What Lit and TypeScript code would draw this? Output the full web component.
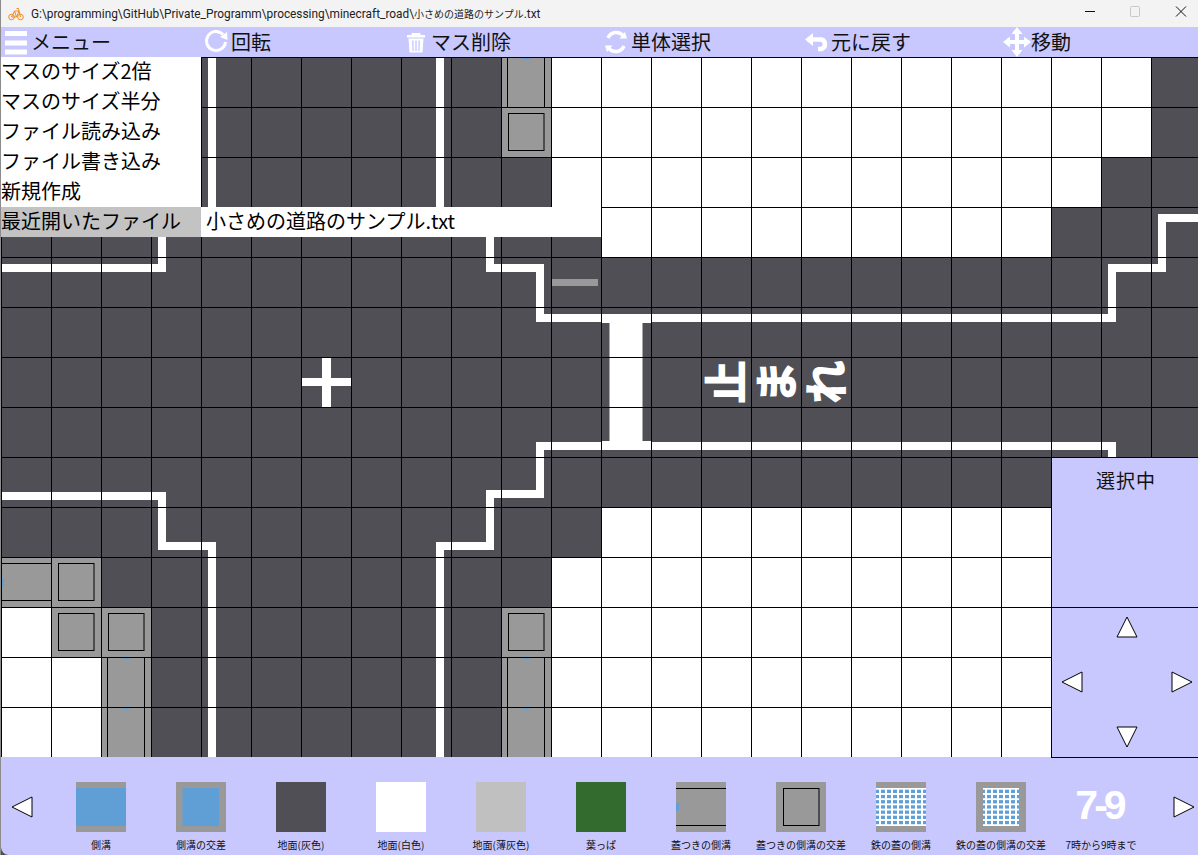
import { LitElement, css, html, svg } from "lit";
import { customElement, property } from "lit/decorators.js";

const FONT = `"Noto Sans CJK JP", "Liberation Sans", sans-serif`;

const ROWS = [
  "ddddddddddvwwwwwwwwwwwwd",
  "ddddddddddxwwwwwwwwwwwwd",
  "dddddddddddwwwwwwwwwwwdd",
  "ddddddddddddwwwwwwwwwddd",
  "dddddddddddddddddddddddd",
  "dddddddddddddddddddddddd",
  "dddddddddddddd止まれddddddd",
  "dddddddddddddddddddddddd",
  "dddddddddddddddddddddddd",
  "ddddddddddddwwwwwwwwwwww",
  "hxdddddddddwwwwwwwwwwwww",
  "wxxdddddddxwwwwwwwwwwwww",
  "wwvdddddddvwwwwwwwwwwwww",
  "wwvdddddddvwwwwwwwwwwwww",
];

const PALETTE = [
  ["g", "側溝"],
  ["c", "側溝の交差"],
  ["d", "地面(灰色)"],
  ["w", "地面(白色)"],
  ["l", "地面(薄灰色)"],
  ["f", "葉っぱ"],
  ["h", "蓋つきの側溝"],
  ["x", "蓋つきの側溝の交差"],
  ["m", "鉄の蓋の側溝"],
  ["n", "鉄の蓋の側溝の交差"],
];

const GRAY = "#999999";
const BLUE = "#609fd6";

function metal(x0: number, x1: number) {
  const cells = [];
  for (let r = 0; r < 7; r++) {
    for (let c = 0; c < 9; c++) {
      const x = -1 + c * 6;
      const l = Math.max(x, x0);
      const rr = Math.min(x + 4, x1);
      if (rr > l) cells.push(svg`<rect x=${l} y=${7.7 + r * 5.2} width=${rr - l} height="3.3" fill=${BLUE} />`);
    }
  }
  return cells;
}

function tileArt(kind: string) {
  switch (kind) {
    case "g":
      return svg`<rect width="50" height="50" fill=${GRAY} /><rect y="6" width="50" height="38" fill=${BLUE} />`;
    case "c":
      return svg`<rect width="50" height="50" fill=${GRAY} /><rect x="6.5" y="6" width="36.5" height="38" fill=${BLUE} />`;
    case "h":
      return svg`<rect width="50" height="50" fill=${GRAY} />
        <path d="M0 6.5H50M0 43.5H50" stroke="#000" fill="none" />
        <rect y="21" width="3" height="7.5" fill=${BLUE} />`;
    case "v":
      return svg`<rect width="50" height="50" fill=${GRAY} />
        <path d="M6.5 0V50M43.5 0V50" stroke="#000" fill="none" />
        <rect x="22" width="7" height="2" fill=${BLUE} />`;
    case "x":
      return svg`<rect width="50" height="50" fill=${GRAY} />
        <rect x="7.5" y="6.5" width="35.5" height="37" fill="none" stroke="#000" />`;
    case "m":
      return svg`<rect width="50" height="50" fill=${GRAY} /><rect y="6" width="50" height="38" fill="#fff" />${metal(0, 50)}`;
    case "n":
      return svg`<rect width="50" height="50" fill=${GRAY} /><rect x="7" y="6" width="36" height="38" fill="#fff" />${metal(7, 43)}`;
    default:
      return null;
  }
}

@customElement("road-tile")
export class RoadTile extends LitElement {
  @property() kind = "d";

  render() {
    const art = tileArt(this.kind);
    if (art) return html`<svg viewBox="0 0 50 50" width="50" height="50">${art}</svg>`;
    if ("dwlf".includes(this.kind)) return html`<div class="fill ${this.kind}"></div>`;
    return html`<div class="fill d"><span>${this.kind}</span></div>`;
  }

  static styles = css`
    :host {
      display: block;
      width: 50px;
      height: 50px;
    }
    svg {
      display: block;
    }
    .fill {
      display: flex;
      width: 100%;
      height: 100%;
      align-items: center;
      justify-content: center;
    }
    .d {
      background: #504f55;
    }
    .w {
      background: #ffffff;
    }
    .l {
      background: #c0c0c0;
    }
    .f {
      background: #336b2e;
    }
    span {
      display: block;
      transform: translateX(-2px) rotate(-90deg);
      color: #fff;
      font-family: ${css([FONT] as any)};
      font-size: 44px;
      font-weight: 900;
      line-height: 1;
    }
  `;
}

function arrow(dir: string) {
  const points: Record<string, string> = {
    left: "21,1 21,21 1,11",
    right: "1,1 1,21 21,11",
    up: "1,21 21,21 11,1",
    down: "1,1 21,1 11,21",
  };
  return html`<svg class="arrow" viewBox="0 0 22 22" width="22" height="22">
    <polygon points=${points[dir]} fill="#fff" stroke="#000" />
  </svg>`;
}

@customElement("road-map")
export class RoadMap extends LitElement {
  render() {
    return html`
      <div class="cells">
        ${ROWS.map((row) => [...row].map((k) => html`<road-tile kind=${k}></road-tile>`))}
      </div>
      <svg class="marks" viewBox="1 57 1197 700" width="1197" height="700">
        <g fill="none" stroke="#fff" stroke-width="8">
          <path d="M1 268H162V218H212V57" />
          <path d="M440 57V218H490V268H540V318H1112V268H1162V218H1200" />
          <path d="M1 496H162V546H212V757" />
          <path d="M1112 457V446H540V494H490V546H440V757" />
        </g>
        <g fill="#fff">
          <rect x="601.5" y="315" width="50" height="8" />
          <rect x="601.5" y="441" width="50" height="8" />
          <rect x="609.5" y="315" width="33" height="134" />
          <rect x="322" y="358" width="9" height="49" />
          <rect x="302" y="378" width="49" height="8" />
        </g>
        <rect x="552" y="279" width="46" height="7" fill="#999999" />
      </svg>
      <div class="lines"></div>

      <div class="menu">
        <div class="item">マスのサイズ2倍</div>
        <div class="item">マスのサイズ半分</div>
        <div class="item">ファイル読み込み</div>
        <div class="item">ファイル書き込み</div>
        <div class="item">新規作成</div>
        <div class="item active">最近開いたファイル</div>
      </div>
      <div class="submenu">小さめの道路のサンプル.txt</div>

      <div class="panel">
        <div class="selected">選択中</div>
        <div class="pad">
          <span></span>${arrow("up")}<span></span>
          ${arrow("left")}<span></span>${arrow("right")}
          <span></span>${arrow("down")}<span></span>
        </div>
      </div>
    `;
  }

  static styles = css`
    :host {
      display: block;
      position: relative;
      height: 700px;
      font-family: ${css([FONT] as any)};
    }
    .cells {
      display: grid;
      grid-template-columns: repeat(24, 50px);
      grid-auto-rows: 50px;
    }
    .marks {
      position: absolute;
      left: 0;
      top: 0;
    }
    .lines {
      position: absolute;
      inset: 0;
      background-image: linear-gradient(#000 1px, transparent 1px),
        linear-gradient(90deg, #000 1px, transparent 1px);
      background-size: 50px 50px;
    }
    .menu {
      position: absolute;
      left: 0;
      top: 0;
      width: 200px;
      background: #fff;
    }
    .item {
      height: 30px;
      color: #000;
      font-size: 20px;
      line-height: 28px;
      white-space: nowrap;
    }
    .item.active {
      background: #c3c3c3;
    }
    .submenu {
      position: absolute;
      left: 200px;
      top: 150px;
      width: 395px;
      height: 30px;
      padding-left: 5px;
      background: #fff;
      font-size: 20px;
      line-height: 28px;
      white-space: nowrap;
    }
    .panel {
      position: absolute;
      left: 1050px;
      top: 400px;
      width: 147px;
      height: 301px;
      box-sizing: border-box;
      border: 1px solid #000;
      border-right: none;
      background: #c8c8ff;
    }
    .selected {
      height: 150px;
      box-sizing: border-box;
      border-bottom: 1px solid #000;
      padding: 8px 0 0 2px;
      font-size: 19px;
      line-height: 28px;
      letter-spacing: 1px;
      text-align: center;
      color: #111;
    }
    .pad {
      display: grid;
      grid-template-columns: repeat(3, 22px);
      grid-template-rows: repeat(3, 22px);
      gap: 33px;
      justify-content: center;
      padding: 8px 0 0 3px;
    }
    .arrow {
      display: block;
    }
  `;
}

@customElement("tile-palette")
export class TilePalette extends LitElement {
  render() {
    return html`
      <div class="side">${arrow("left")}</div>
      ${PALETTE.map(
        ([kind, label]) => html`
          <div class="entry">
            <road-tile kind=${kind}></road-tile>
            <div class="label">${label}</div>
          </div>
        `
      )}
      <div class="entry">
        <div class="time">7-9</div>
        <div class="label">7時から9時まで</div>
      </div>
      <div class="side end">${arrow("right")}</div>
    `;
  }

  static styles = css`
    :host {
      display: flex;
      height: 98px;
      background: #c8c8ff;
      border-bottom-left-radius: 8px;
      font-family: ${css([FONT] as any)};
    }
    .side {
      width: 50px;
      flex: none;
      padding: 39px 0 0 10px;
      box-sizing: border-box;
    }
    .side.end {
      padding-left: 22px;
    }
    .arrow {
      display: block;
    }
    .entry {
      display: flex;
      flex-direction: column;
      align-items: center;
      width: 100px;
      flex: none;
      padding-top: 25px;
      box-sizing: border-box;
    }
    .label {
      margin-top: 6px;
      color: #111;
      font-size: 10px;
      line-height: 14px;
      white-space: nowrap;
    }
    .time {
      height: 50px;
      margin-right: 4px;
      color: #fff;
      font-family: "Liberation Sans", sans-serif;
      font-size: 41px;
      font-weight: 700;
      letter-spacing: -4px;
      line-height: 46px;
    }
  `;
}

const ICONS = {
  menu: svg`<rect x="1" y="4" width="22" height="5" /><rect x="1" y="13.5" width="22" height="5" /><rect x="1" y="22.5" width="22" height="5" />`,
  rotate: svg`<path d="M19 7.5A9.5 9.5 0 1 0 21.5 15" fill="none" stroke="#fff" stroke-width="3" />
    <polygon points="23,5 23.5,13 16,10" />`,
  trash: svg`<rect x="7.5" y="6" width="9" height="2" /><rect x="3" y="8" width="18" height="2.5" />
    <path fill-rule="evenodd" d="M4.5 11.5H19.5L18.5 25.5H5.5ZM8 13.5L8.5 24H9.8L9.5 13.5ZM11.3 13.5V24H12.7V13.5ZM14.5 13.5L14.2 24H15.5L16 13.5Z" />`,
  single: svg`<path d="M4 11A9 9 0 0 1 19.5 9M20 19A9 9 0 0 1 4.5 21" fill="none" stroke="#fff" stroke-width="3.5" />
    <polygon points="23,11.5 15.5,11.5 21,5" /><polygon points="1,18.5 8.5,18.5 3,25" />`,
  undo: svg`<polygon points="1,12.5 9,6 9,19" />
    <path d="M8 12.5H17.5A5 5 0 0 1 17.5 22H14" fill="none" stroke="#fff" stroke-width="4.5" />`,
  move: svg`<polygon points="13,0 18.5,7 7.5,7" /><polygon points="13,30 18.5,23 7.5,23" />
    <polygon points="-1,15 6,9.5 6,20.5" /><polygon points="27,15 20,9.5 20,20.5" />
    <rect x="11" y="6" width="4" height="18" /><rect x="5" y="13" width="16" height="4" />`,
};

const TOOLS: [keyof typeof ICONS, string][] = [
  ["menu", "メニュー"],
  ["rotate", "回転"],
  ["trash", "マス削除"],
  ["single", "単体選択"],
  ["undo", "元に戻す"],
  ["move", "移動"],
];

@customElement("app-root")
export class AppRoot extends LitElement {
  render() {
    return html`
      <div class="titlebar">
        <svg class="bike" viewBox="0 0 16 14" width="16" height="14">
          <g fill="none" stroke="#f08a1d" stroke-width="1">
            <circle cx="3.5" cy="10" r="2.8" />
            <circle cx="12.5" cy="10" r="2.8" />
            <path d="M3.5 10L6.5 4H11L12.5 10M6.5 4L8.5 10H3.5M11 4L10.5 1.5H8.5M8.5 10L11 4" />
          </g>
        </svg>
        <div class="title">G:\\programming\\GitHub\\Private_Programm\\processing\\minecraft_road\\<span>小さめの道路のサンプル</span>.txt</div>
        <svg class="controls" viewBox="0 0 120 27" width="120" height="27">
          <path d="M6 11.5H16" stroke="#111" fill="none" />
          <rect x="51.5" y="6.5" width="9" height="10" rx="1" stroke="#c8c8c8" fill="none" />
          <path d="M97 6.5L107 16.5M107 6.5L97 16.5" stroke="#111" fill="none" />
        </svg>
      </div>
      <div class="toolbar">
        ${TOOLS.map(
          ([icon, label]) => html`
            <div class="tool">
              <svg viewBox="0 0 24 30" width="24" height="30">${ICONS[icon]}</svg>
              <span>${label}</span>
            </div>
          `
        )}
      </div>
      <road-map></road-map>
      <tile-palette></tile-palette>
    `;
  }

  static styles = css`
    :host {
      display: block;
      width: 1198px;
      height: 855px;
      box-sizing: border-box;
      border-left: 1px solid #8c8c8c;
      overflow: hidden;
      background: #504f55;
      font-family: ${css([FONT] as any)};
    }
    .titlebar {
      display: flex;
      align-items: center;
      height: 27px;
      padding-left: 7px;
      background: #f3f3f3;
    }
    .bike {
      flex: none;
    }
    .title {
      flex: 1;
      margin-left: 7px;
      color: #222;
      font-family: Roboto, "Noto Sans CJK JP", sans-serif;
      font-size: 11.85px;
      white-space: nowrap;
    }
    .title span {
      font-family: "Noto Sans CJK JP", sans-serif;
      font-size: 10px;
    }
    .controls {
      flex: none;
      margin-right: -1px;
      overflow: visible;
    }
    .toolbar {
      display: flex;
      height: 30px;
      background: #c8c8ff;
    }
    .tool {
      display: flex;
      align-items: center;
      gap: 3px;
      width: 200px;
      box-sizing: border-box;
      padding-left: 3px;
      color: #111;
      font-size: 20px;
      flex: none;
    }
    .tool svg {
      fill: #fff;
      overflow: visible;
      flex: none;
    }
    .tool span {
      line-height: 30px;
    }
  `;
}

declare global {
  interface HTMLElementTagNameMap {
    "app-root": AppRoot;
    "road-map": RoadMap;
    "road-tile": RoadTile;
    "tile-palette": TilePalette;
  }
}
